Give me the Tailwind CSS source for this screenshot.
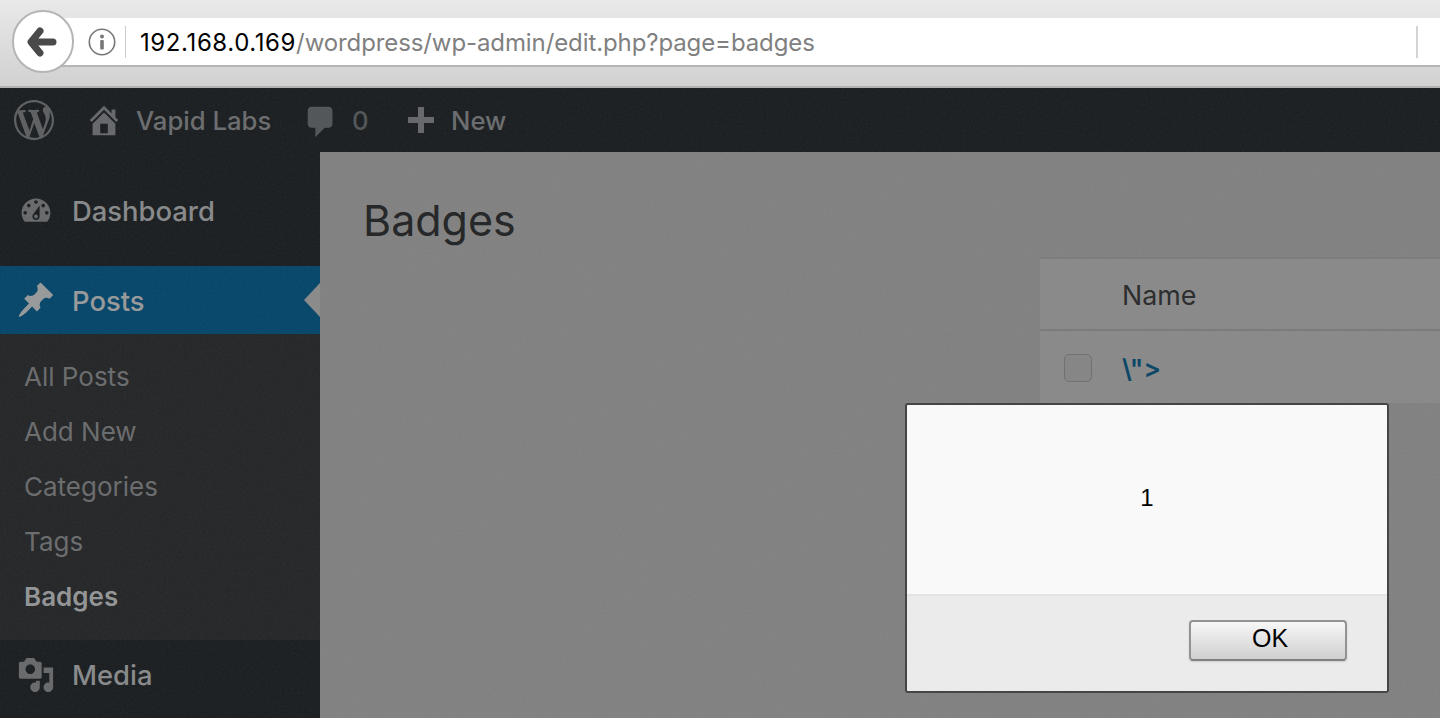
<!doctype html>
<html>

<head>
    <meta charset="UTF-8">
    <script src="https://cdn.jsdelivr.net/npm/@tailwindcss/browser@4"></script>
</head>

<body class="h-[718px] overflow-hidden font-['Inter',sans-serif]">
    <div class="relative flex flex-col h-[718px] overflow-hidden bg-[#818181]">

        <!-- browser toolbar -->
        <div class="h-[88px] shrink-0 pt-[18px] border-b-2 border-[#b2b2b2] bg-gradient-to-b from-[#e9e9e9] to-[#d1d1d1]">
            <div class="relative h-[49px] ml-[50px] pl-[90px] flex items-center bg-white border-b-2 border-[#b6b6b6]">
                <div class="absolute left-[-38px] top-[-8px] w-[62px] h-[63px] rounded-full bg-white border-2 border-[#b5b5b5] flex items-center justify-center">
                    <svg class="w-[30px] h-[32px] mr-[2px]" viewBox="0 0 30 32" fill="none" stroke="#4a4a4a" stroke-width="7" stroke-linecap="round" stroke-linejoin="round">
                        <path d="M13 5 L4 16 L13 27 M5 16 H26" />
                    </svg>
                </div>
                <svg class="absolute left-[38px] top-[10px] w-[28px] h-[28px]" viewBox="0 0 28 28" fill="none">
                    <circle cx="14" cy="14" r="12.7" stroke="#777" stroke-width="1.6" />
                    <circle cx="14" cy="8.5" r="2" fill="#777" />
                    <rect x="12.2" y="12" width="3.6" height="9.5" rx="1" fill="#777" />
                </svg>
                <div class="absolute left-[75px] top-[8px] w-px h-[32px] bg-[#cccccc]"></div>
                <div class="mt-[3px] text-[24px] leading-none tracking-[-0.1px] text-[#808080] whitespace-nowrap"><span class="tracking-[0.6px] text-black">192.168.0.169</span>/wordpress/wp-admin/edit.php?page=badges</div>
                <div class="absolute right-[22px] top-[8px] w-[2px] h-[32px] bg-[#d4d4d4]"></div>
            </div>
        </div>

        <!-- admin bar -->
        <div class="h-[64px] shrink-0 flex items-center bg-[#1a1e21] text-[#6a6c6e] text-[25.7px] font-medium whitespace-nowrap">
            <svg class="ml-[14px] w-[40px] h-[40px]" viewBox="0 0 20 20" fill="#5d5f61">
                <path d="M20 10c0-5.51-4.49-10-10-10C4.48 0 0 4.49 0 10c0 5.52 4.48 10 10 10 5.51 0 10-4.48 10-10zM7.78 15.37L4.37 6.22c.55-.02 1.17-.08 1.17-.08.5-.06.44-1.13-.06-1.11 0 0-1.45.11-2.37.11-.18 0-.37 0-.58-.01C4.12 2.69 6.87 1.11 10 1.11c2.33 0 4.45.87 6.05 2.34-.68-.11-1.65.39-1.65 1.58 0 .74.45 1.36.9 2.1.35.61.55 1.36.55 2.46 0 1.49-1.4 5-1.4 5l-3.03-8.37c.54-.02.82-.17.82-.17.5-.05.44-1.25-.06-1.22 0 0-1.44.12-2.38.12-.87 0-2.33-.12-2.33-.12-.5-.03-.56 1.2-.06 1.22l.92.08 1.26 3.41zM17.41 10c.24-.64.74-1.87.43-4.25.7 1.29 1.05 2.71 1.05 4.25 0 3.29-1.73 6.24-4.4 7.78.97-2.59 1.94-5.2 2.92-7.78zM6.1 18.09C3.12 16.65 1.11 13.53 1.11 10c0-1.3.23-2.48.72-3.59C3.25 10.3 4.67 14.2 6.1 18.09zm4.03-6.63l2.58 6.98c-.86.29-1.76.45-2.71.45-.79 0-1.57-.11-2.29-.33.81-2.38 1.62-4.74 2.42-7.1z" />
            </svg>
            <svg class="ml-[31px] w-[38px] h-[38px]" viewBox="0 0 20 20" fill="#65676a">
                <path d="M16 8.5l1.53 1.53-1.06 1.06L10 4.62l-6.47 6.47-1.06-1.06L10 2.5l4 4v-2h2v4zm-6-2.46l6 5.99V18H4v-5.97zM12 17v-5H8v5h4z" />
            </svg>
            <span class="ml-[13px] mt-[3px] w-[135px]">Vapid Labs</span>
            <svg class="ml-[31px] mt-[4px] w-[38px] h-[38px]" viewBox="0 0 20 20" fill="#525557">
                <path d="M5 2h9c1.1 0 2 .9 2 2v7c0 1.1-.9 2-2 2h-2l-5 5v-5H5c-1.1 0-2-.9-2-2V4c0-1.1.9-2 2-2z" />
            </svg>
            <span class="ml-[12px] mt-[3px] w-[15px] text-[#525557]">0</span>
            <svg class="ml-[40px] w-[28px] h-[28px]" viewBox="0 0 28 28" fill="#65676a">
                <path d="M11 1h6v10h10v6H17v10h-6V17H1v-6h10z" />
            </svg>
            <span class="ml-[16px] mt-[3px]">New</span>
        </div>

        <div class="flex flex-1 min-h-0">
            <!-- sidebar -->
            <div class="w-[320px] shrink-0 flex flex-col bg-[#1a1e21] text-[27.4px] font-medium whitespace-nowrap">
                <div class="h-[68px] mt-[25px] mb-[21px] flex items-center text-[#88898a]">
                    <svg class="ml-[18px] w-[36px] h-[36px]" viewBox="0 0 20 20" fill="#67696b">
                        <path d="M3.76 16h12.48c1.1-1.37 1.76-3.11 1.76-5 0-4.42-3.58-8-8-8s-8 3.58-8 8c0 1.89.66 3.63 1.76 5zM10 4c.55 0 1 .45 1 1s-.45 1-1 1-1-.45-1-1 .45-1 1-1zM6 6c.55 0 1 .45 1 1s-.45 1-1 1-1-.45-1-1 .45-1 1-1zm8 0c.55 0 1 .45 1 1s-.45 1-1 1-1-.45-1-1 .45-1 1-1zm-5.37 5.55L12 7v6c0 1.1-.9 2-2 2s-2-.9-2-2c0-.57.24-1.08.63-1.45zM4 10c.55 0 1 .45 1 1s-.45 1-1 1-1-.45-1-1 .45-1 1-1zm12 0c.55 0 1 .45 1 1s-.45 1-1 1-1-.45-1-1 .45-1 1-1zm-5 3c0-.55-.45-1-1-1s-1 .45-1 1 .45 1 1 1 1-.45 1-1z" />
                    </svg>
                    <span class="ml-[18px] mt-[1px]">Dashboard</span>
                </div>
                <div class="relative h-[68px] flex items-center bg-[#06466a] text-[#98999a]">
                    <svg class="ml-[16px] w-[40px] h-[40px]" viewBox="0 0 20 20" fill="#98999a">
                        <path d="M10.44 3.02l1.82-1.82 6.36 6.35-1.83 1.82c-1.05-.68-2.48-.57-3.41.36l-.75.75c-.92.93-1.04 2.35-.35 3.41l-1.83 1.82-2.41-2.41-2.8 2.79c-.42.42-3.38 2.71-3.8 2.29s1.86-3.39 2.28-3.81l2.79-2.79L4.1 9.36l1.83-1.82c1.05.69 2.48.57 3.4-.36l.75-.75c.93-.92 1.05-2.35.36-3.41z" />
                    </svg>
                    <span class="ml-[16px] mt-[3px]">Posts</span>
                    <div class="absolute right-0 top-[17px] w-0 h-0 border-y-[17px] border-y-transparent border-r-[16px] border-r-[#8a8a8a]"></div>
                </div>
                <div class="h-[306px] pt-[15px] flex flex-col bg-[#242628] text-[26px] font-normal text-[#6a6b6d]">
                    <div class="h-[55px] pl-[24px] flex items-center">All Posts</div>
                    <div class="h-[55px] pl-[24px] flex items-center">Add New</div>
                    <div class="h-[55px] pl-[24px] flex items-center">Categories</div>
                    <div class="h-[55px] pl-[24px] flex items-center">Tags</div>
                    <div class="h-[55px] pl-[24px] flex items-center font-semibold text-[#939495]">Badges</div>
                </div>
                <div class="h-[68px] mt-[1px] flex items-center text-[#88898a]">
                    <svg class="ml-[17px] w-[38px] h-[38px]" viewBox="0 0 20 20" fill="#67696b">
                        <path d="M13 11V4c0-.55-.45-1-1-1h-1.67L9 1H5L3.67 3H2c-.55 0-1 .45-1 1v7c0 .55.45 1 1 1h10c.55 0 1-.45 1-1zM7 4.5c1.38 0 2.5 1.12 2.5 2.5S8.38 9.5 7 9.5 4.5 8.38 4.5 7 5.62 4.5 7 4.5zM14 6h5v10.5c0 1.38-1.12 2.5-2.5 2.5S14 17.88 14 16.5s1.12-2.5 2.5-2.5c.17 0 .34.02.5.05V9h-3V6zm-4 8.05V13h2v3.5c0 1.38-1.12 2.5-2.5 2.5S7 17.88 7 16.5 8.12 14 9.5 14c.17 0 .34.02.5.05z" />
                    </svg>
                    <span class="ml-[17px] mt-[1px]">Media</span>
                </div>
            </div>

            <!-- content -->
            <div class="flex-1 flex justify-between">
                <h1 class="ml-[43px] mt-[44px] text-[43px] leading-[48px] font-normal text-[#232425]">Badges</h1>
                <div class="w-[400px] h-[146px] mt-[105px] bg-[#898989] border-t-2 border-[#7c7c7c]">
                    <div class="h-[72px] pl-[82px] pt-[3px] flex items-center border-b-2 border-[#7a7a7a] text-[26.8px] text-[#292a2b]">Name</div>
                    <div class="h-[71px] flex items-center">
                        <div class="ml-[24px] mt-[2px] w-[28px] h-[28px] rounded-[5px] border border-[#6f6f6f] bg-[#858585]"></div>
                        <a class="ml-[30px] mt-[3px] text-[26px] font-semibold text-[#0a4566]">\"&gt;</a>
                    </div>
                </div>
            </div>
        </div>

        <!-- grain of the dimmed page -->
        <svg class="absolute left-0 top-[88px] w-[1440px] h-[630px] opacity-[0.05] pointer-events-none">
            <filter id="grain">
                <feTurbulence type="fractalNoise" baseFrequency="0.45" numOctaves="2" />
                <feColorMatrix type="saturate" values="0" />
            </filter>
            <rect width="1440" height="630" filter="url(#grain)" />
        </svg>

        <!-- alert dialog -->
        <div class="absolute left-[905px] top-[403px] w-[484px] h-[290px] flex flex-col rounded-[3px] border-2 border-[#454545] overflow-hidden font-['Liberation_Sans',sans-serif]">
            <div class="h-[191px] flex items-center justify-center pb-[3px] bg-[#f9f9f9] border-b-2 border-[#e3e3e3] text-[24px] text-black">1</div>
            <div class="flex-1 flex justify-end pt-[24px] pr-[40px] bg-[#ebebeb]">
                <button class="w-[158px] h-[41px] pb-[4px] pl-[4px] rounded-[4px] border-2 border-[#939393] border-b-[#808080] bg-gradient-to-b from-[#f8f8f8] to-[#cfcfcf] shadow-[0_1px_2px_rgba(0,0,0,0.12)] text-[25px] leading-none text-black">OK</button>
            </div>
        </div>
    </div>
</body>

</html>
